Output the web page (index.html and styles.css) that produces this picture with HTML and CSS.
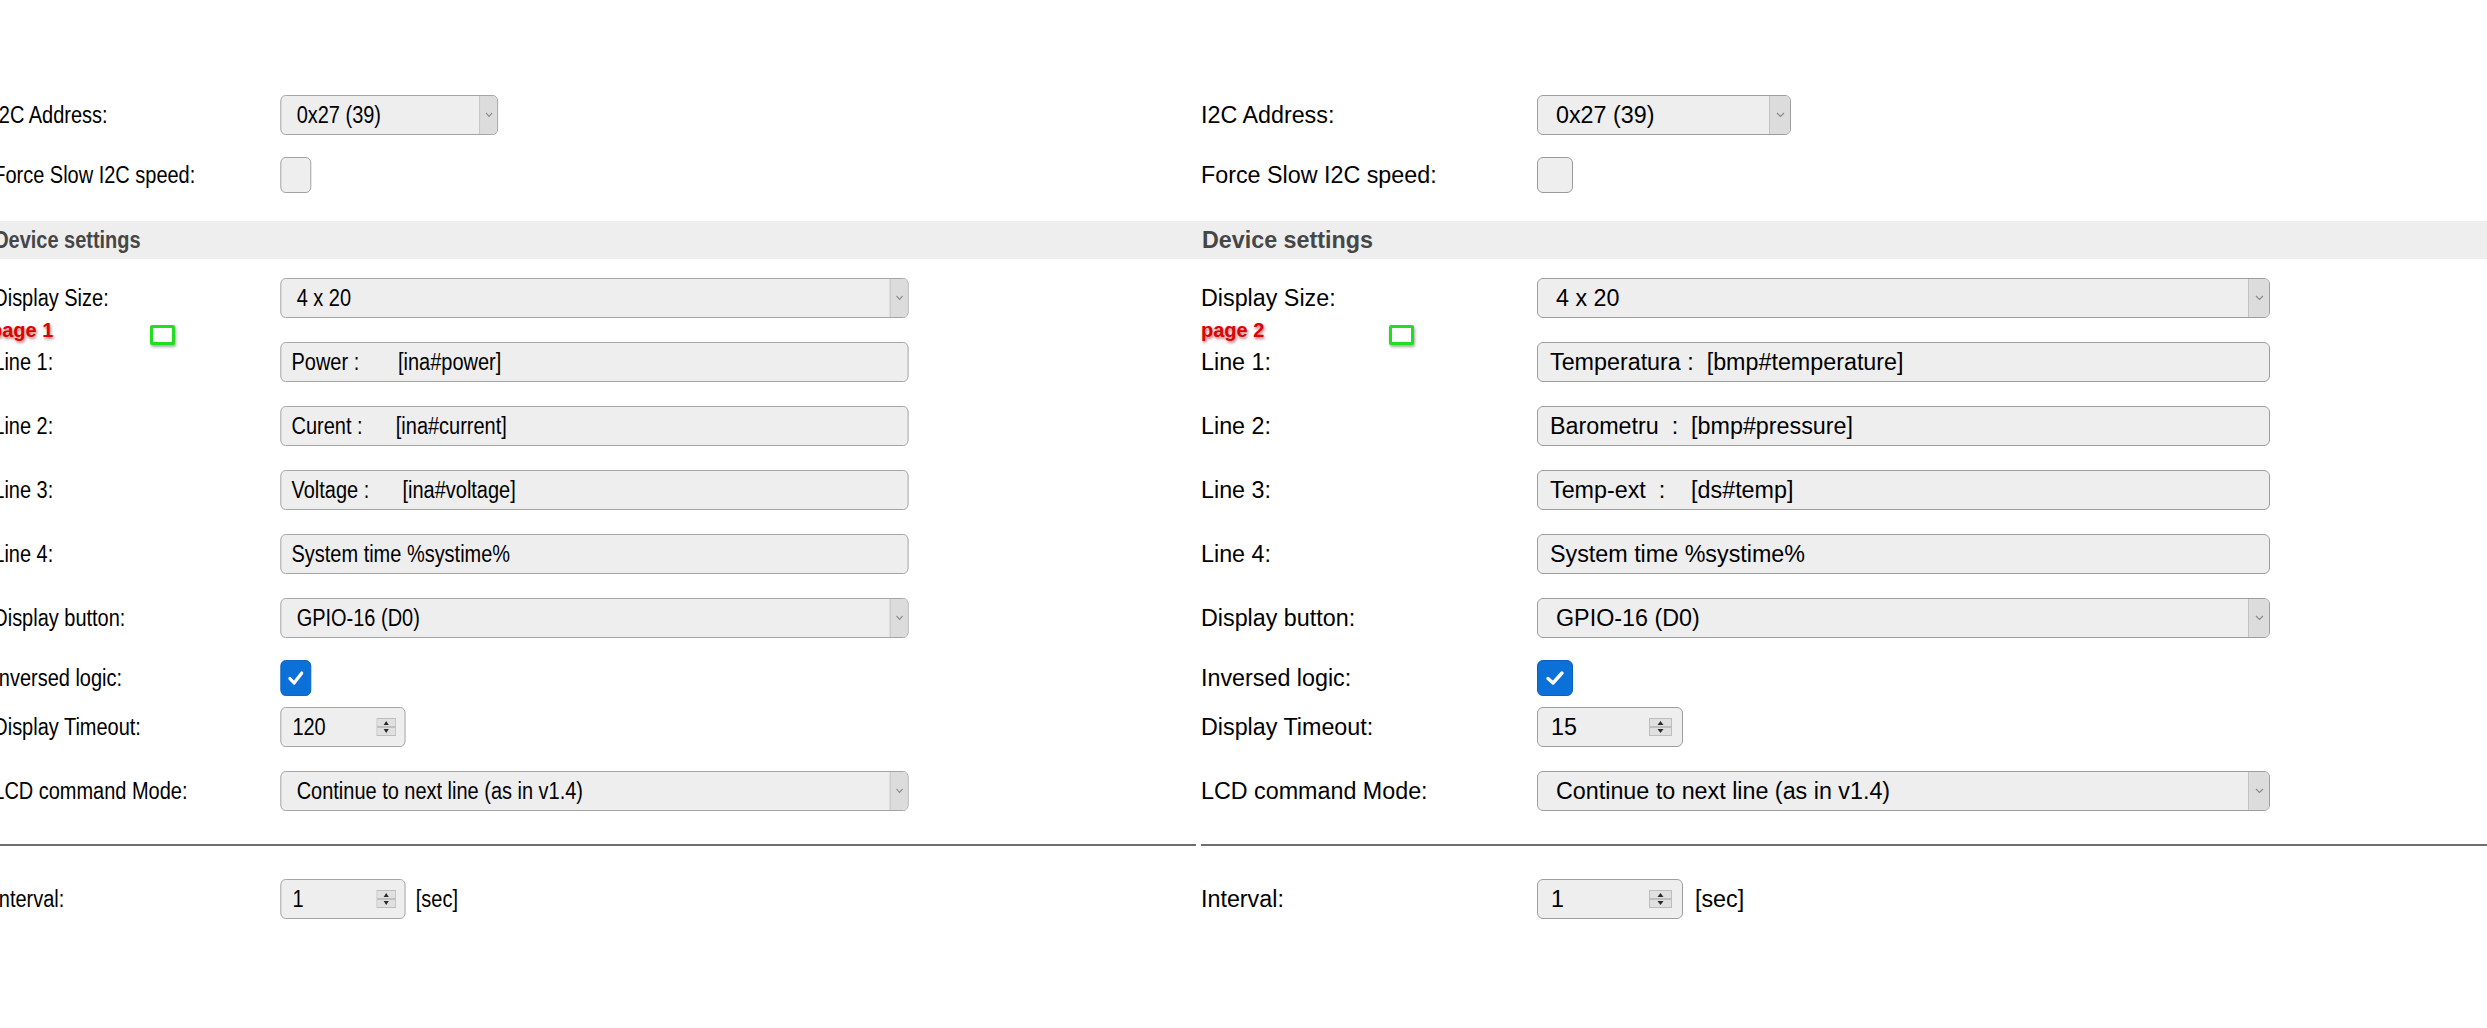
FILE: index.html
```html
<!DOCTYPE html>
<html lang="en">
<head>
<meta charset="utf-8">
<title>LCD2004 settings</title>
<link rel="stylesheet" href="styles.css">
</head>
<body>
<div class="screens">

  <section class="shot shot-a">
    <form class="cfg">
      <div class="row h64"><span class="lbl">I2C Address:</span><div class="ctl sel w-s"><span class="val">0x27 (39)</span><span class="arr"><svg width="9" height="6" viewBox="0 0 9 6"><path d="M1 1 L4.5 4.5 L8 1" fill="none" stroke="#8a8a8a" stroke-width="1.2"/></svg></span></div></div>
      <div class="row h56"><span class="lbl">Force Slow I2C speed:</span><span class="cb"></span></div>
      <div class="bar">Device settings</div>
      <div class="row h64"><span class="lbl">Display Size:</span><div class="ctl sel w-l"><span class="val">4 x 20</span><span class="arr"><svg width="9" height="6" viewBox="0 0 9 6"><path d="M1 1 L4.5 4.5 L8 1" fill="none" stroke="#8a8a8a" stroke-width="1.2"/></svg></span></div></div>
      <div class="row h64"><span class="lbl">Line 1:</span><div class="ctl inp w-l"><span class="val">Power :       [ina#power]</span></div></div>
      <div class="row h64"><span class="lbl">Line 2:</span><div class="ctl inp w-l"><span class="val">Curent :      [ina#current]</span></div></div>
      <div class="row h64"><span class="lbl">Line 3:</span><div class="ctl inp w-l"><span class="val">Voltage :      [ina#voltage]</span></div></div>
      <div class="row h64"><span class="lbl">Line 4:</span><div class="ctl inp w-l"><span class="val">System time %systime%</span></div></div>
      <div class="row h64"><span class="lbl">Display button:</span><div class="ctl sel w-l"><span class="val">GPIO-16 (D0)</span><span class="arr"><svg width="9" height="6" viewBox="0 0 9 6"><path d="M1 1 L4.5 4.5 L8 1" fill="none" stroke="#8a8a8a" stroke-width="1.2"/></svg></span></div></div>
      <div class="row h56"><span class="lbl">Inversed logic:</span><span class="cb on"><svg width="20" height="16" viewBox="0 0 20 16"><path d="M3 8.5 L8 13 L17 3" fill="none" stroke="#fff" stroke-width="3.4" stroke-linecap="round" stroke-linejoin="round"/></svg></span></div>
      <div class="row h53"><span class="lbl">Display Timeout:</span><div class="ctl num"><span class="val">120</span><span class="spin"><svg width="23" height="18" viewBox="0 0 23 18"><rect x="0.5" y="0.5" width="22" height="17" fill="#e0e0e0" stroke="#bdbdbd"/><line x1="1" y1="9" x2="22" y2="9" stroke="#9a9a9a"/><path d="M8.5 7 L11.5 3 L14.5 7 Z M8.5 11 L11.5 15 L14.5 11 Z" fill="#2a2a2a"/></svg></span></div></div>
      <div class="row h64"><span class="lbl">LCD command Mode:</span><div class="ctl sel w-l"><span class="val">Continue to next line (as in v1.4)</span><span class="arr"><svg width="9" height="6" viewBox="0 0 9 6"><path d="M1 1 L4.5 4.5 L8 1" fill="none" stroke="#8a8a8a" stroke-width="1.2"/></svg></span></div></div>
      <hr class="sep">
      <div class="row h64"><span class="lbl">Interval:</span><div class="ctl num"><span class="val">1</span><span class="spin"><svg width="23" height="18" viewBox="0 0 23 18"><rect x="0.5" y="0.5" width="22" height="17" fill="#e0e0e0" stroke="#bdbdbd"/><line x1="1" y1="9" x2="22" y2="9" stroke="#9a9a9a"/><path d="M8.5 7 L11.5 3 L14.5 7 Z M8.5 11 L11.5 15 L14.5 11 Z" fill="#2a2a2a"/></svg></span></div><span class="unit">[sec]</span></div>
    </form>
    <span class="tag">page 1</span>
    <span class="mark"></span>
  </section>

  <section class="shot shot-b">
    <form class="cfg">
      <div class="row h64"><span class="lbl">I2C Address:</span><div class="ctl sel w-s"><span class="val">0x27 (39)</span><span class="arr"><svg width="9" height="6" viewBox="0 0 9 6"><path d="M1 1 L4.5 4.5 L8 1" fill="none" stroke="#8a8a8a" stroke-width="1.2"/></svg></span></div></div>
      <div class="row h56"><span class="lbl">Force Slow I2C speed:</span><span class="cb"></span></div>
      <div class="bar">Device settings</div>
      <div class="row h64"><span class="lbl">Display Size:</span><div class="ctl sel w-l"><span class="val">4 x 20</span><span class="arr"><svg width="9" height="6" viewBox="0 0 9 6"><path d="M1 1 L4.5 4.5 L8 1" fill="none" stroke="#8a8a8a" stroke-width="1.2"/></svg></span></div></div>
      <div class="row h64"><span class="lbl">Line 1:</span><div class="ctl inp w-l"><span class="val">Temperatura :  [bmp#temperature]</span></div></div>
      <div class="row h64"><span class="lbl">Line 2:</span><div class="ctl inp w-l"><span class="val">Barometru  :  [bmp#pressure]</span></div></div>
      <div class="row h64"><span class="lbl">Line 3:</span><div class="ctl inp w-l"><span class="val">Temp-ext  :    [ds#temp]</span></div></div>
      <div class="row h64"><span class="lbl">Line 4:</span><div class="ctl inp w-l"><span class="val">System time %systime%</span></div></div>
      <div class="row h64"><span class="lbl">Display button:</span><div class="ctl sel w-l"><span class="val">GPIO-16 (D0)</span><span class="arr"><svg width="9" height="6" viewBox="0 0 9 6"><path d="M1 1 L4.5 4.5 L8 1" fill="none" stroke="#8a8a8a" stroke-width="1.2"/></svg></span></div></div>
      <div class="row h56"><span class="lbl">Inversed logic:</span><span class="cb on"><svg width="20" height="16" viewBox="0 0 20 16"><path d="M3 8.5 L8 13 L17 3" fill="none" stroke="#fff" stroke-width="3.4" stroke-linecap="round" stroke-linejoin="round"/></svg></span></div>
      <div class="row h53"><span class="lbl">Display Timeout:</span><div class="ctl num"><span class="val">15</span><span class="spin"><svg width="23" height="18" viewBox="0 0 23 18"><rect x="0.5" y="0.5" width="22" height="17" fill="#e0e0e0" stroke="#bdbdbd"/><line x1="1" y1="9" x2="22" y2="9" stroke="#9a9a9a"/><path d="M8.5 7 L11.5 3 L14.5 7 Z M8.5 11 L11.5 15 L14.5 11 Z" fill="#2a2a2a"/></svg></span></div></div>
      <div class="row h64"><span class="lbl">LCD command Mode:</span><div class="ctl sel w-l"><span class="val">Continue to next line (as in v1.4)</span><span class="arr"><svg width="9" height="6" viewBox="0 0 9 6"><path d="M1 1 L4.5 4.5 L8 1" fill="none" stroke="#8a8a8a" stroke-width="1.2"/></svg></span></div></div>
      <hr class="sep">
      <div class="row h64"><span class="lbl">Interval:</span><div class="ctl num"><span class="val">1</span><span class="spin"><svg width="23" height="18" viewBox="0 0 23 18"><rect x="0.5" y="0.5" width="22" height="17" fill="#e0e0e0" stroke="#bdbdbd"/><line x1="1" y1="9" x2="22" y2="9" stroke="#9a9a9a"/><path d="M8.5 7 L11.5 3 L14.5 7 Z M8.5 11 L11.5 15 L14.5 11 Z" fill="#2a2a2a"/></svg></span></div><span class="unit">[sec]</span></div>
    </form>
    <span class="tag">page 2</span>
    <span class="mark"></span>
  </section>

</div>
</body>
</html>
```

FILE: styles.css
```css
* { box-sizing: border-box; }

html, body {
  margin: 0;
  padding: 0;
  background: #fff;
}

body {
  width: 2487px;
  height: 1028px;
  overflow: hidden;
  font-family: "Liberation Sans", Arial, sans-serif;
  font-size: 23.3px;
  color: #000;
}

.screens {
  display: flex;
  height: 1028px;
}

.shot {
  position: relative;
  overflow: hidden;
  height: 100%;
}

.shot-a {
  width: 1196px;
  flex: none;
}

.shot-b {
  flex: 1;
}

.cfg {
  padding-top: 83px;
  margin: 0;
}

.shot-a .cfg {
  width: 1420px;
  transform: scaleX(0.857);
  transform-origin: 0 0;
  margin-left: -11px;
}

.row {
  display: flex;
  align-items: center;
  padding-left: 5px;
}

.h64 { height: 64px; }
.h56 { height: 56px; }
.h53 {
  height: 53px;
  align-items: flex-start;
  padding-top: 1px;
}
.h53 .lbl { line-height: 40px; }

.lbl {
  width: 335px;
  flex: none;
  white-space: nowrap;
}

.shot-b .lbl {
  width: 336px;
}

.bar {
  margin-top: 18px;
  margin-bottom: 7px;
  height: 38px;
  line-height: 38px;
  padding-left: 6px;
  background: #eeeeee;
  color: #464646;
  font-weight: bold;
}

.sep {
  margin: 21px 0 21px 5px;
  border: 0;
  border-top: 2px solid #6e6e6e;
  height: 0;
}

.ctl {
  height: 40px;
  flex: none;
  display: flex;
  align-items: center;
  border: 1px solid #9e9e9e;
  border-radius: 6px;
  background: #eeeeee;
  white-space: pre;
  overflow: hidden;
}

.ctl .val {
  flex: 1;
}

.sel { padding-left: 18px; }
.inp { padding-left: 12px; }
.num { padding-left: 13px; width: 146px; }

.w-s { width: 254px; }
.w-l { width: 733px; }

.arr {
  align-self: stretch;
  width: 21px;
  flex: none;
  display: flex;
  align-items: center;
  justify-content: center;
  background: #dcdcdc;
  border-left: 1px solid #c2c2c2;
}

.spin {
  flex: none;
  width: 23px;
  height: 18px;
  margin-right: 10px;
  display: flex;
}

.cb {
  width: 36px;
  height: 36px;
  flex: none;
  border: 1px solid #9a9a9a;
  border-radius: 6px;
  background: #eeeeee;
}

.cb.on {
  background: #0b70d8;
  border-color: #0a60bb;
  display: flex;
  align-items: center;
  justify-content: center;
}

.unit {
  margin-left: 12px;
}

.tag {
  position: absolute;
  top: 320px;
  font-family: "Liberation Sans", Arial, sans-serif;
  font-weight: bold;
  font-size: 20px;
  line-height: 20px;
  color: #e00000;
  text-shadow: 1px 2px 3px rgba(130, 0, 0, 0.55);
  white-space: nowrap;
}

.shot-a .tag { left: -10px; }
.shot-b .tag { left: 5px; }

.mark {
  position: absolute;
  top: 325px;
  width: 25px;
  height: 20px;
  border: 3px solid #22dd22;
  border-radius: 2px;
  background: #fff;
  box-shadow: 1px 2px 3px rgba(0, 0, 0, 0.35);
}

.shot-a .mark { left: 150px; }
.shot-b .mark { left: 193px; }
```
